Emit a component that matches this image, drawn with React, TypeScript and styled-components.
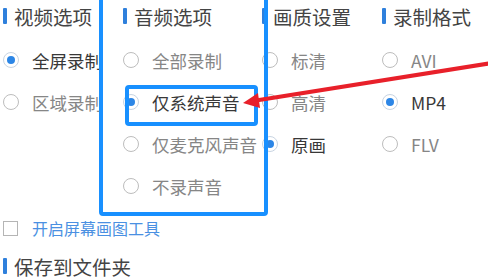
import React from "react";
import styled, { createGlobalStyle } from "styled-components";

const Global = createGlobalStyle`
  html, body { margin: 0; padding: 0; background: #fff; }
  body { font-family: "Noto Sans CJK SC", "Noto Sans", sans-serif; overflow: hidden; }
`;

const Page = styled.div`
  position: relative;
  width: 488px;
  height: 277px;
  overflow: hidden;
  padding-left: 3px;
  box-sizing: border-box;
`;

const Columns = styled.div`
  display: grid;
  grid-template-columns: 120px 139px 120px 1fr;
`;

const Column = styled.div`
  display: flex;
  flex-direction: column;
`;

const Title = styled.div`
  display: flex;
  align-items: center;
  gap: 7px;
  height: 32px;
  font-size: 19.5px;
  color: #444;
  white-space: nowrap;
  &::before {
    content: "";
    width: 4px;
    height: 16px;
    background: #2f80dc;
    border-radius: 1px;
  }
`;

const OptionList = styled.div`
  display: flex;
  flex-direction: column;
  margin-top: 7px;
`;

const Option = styled.div<{ $on?: boolean }>`
  display: flex;
  align-items: center;
  gap: 13px;
  height: 42px;
  font-size: 17.5px;
  color: ${(p) => (p.$on ? "#383838" : "#868686")};
  font-weight: 400;
  white-space: nowrap;
`;

const Radio = styled.span<{ $on?: boolean }>`
  flex: none;
  width: 16px;
  height: 16px;
  box-sizing: border-box;
  border-radius: 50%;
  border: 1.5px solid ${(p) => (p.$on ? "#c8d4e2" : "#bdbdbd")};
  display: flex;
  align-items: center;
  justify-content: center;
  background: #fff;
  &::after {
    content: "";
    width: 8px;
    height: 8px;
    border-radius: 50%;
    background: ${(p) => (p.$on ? "#2c86e6" : "transparent")};
  }
`;

const CheckRow = styled.div`
  display: flex;
  align-items: center;
  gap: 14px;
  height: 30px;
  margin-top: 6px;
  font-size: 16px;
  color: #4a90e2;
`;

const CheckBox = styled.span`
  width: 15px;
  height: 15px;
  box-sizing: border-box;
  border: 1.5px solid #b5b5b5;
  background: #fff;
`;

const SaveTitle = styled(Title)`
  margin-top: 7px;
`;

const Highlight = styled.div<{ $l: number; $t: number; $w: number; $h: number; $b: number }>`
  position: absolute;
  left: ${(p) => p.$l}px;
  top: ${(p) => p.$t}px;
  width: ${(p) => p.$w}px;
  height: ${(p) => p.$h}px;
  box-sizing: border-box;
  border: ${(p) => p.$b}px solid #1890ff;
  border-radius: 4px;
  pointer-events: none;
`;

const ArrowLayer = styled.svg`
  position: absolute;
  left: 0;
  top: 0;
  pointer-events: none;
`;

type Opt = { label: string; on?: boolean };
const groups: { title: string; options: Opt[] }[] = [
  { title: "视频选项", options: [{ label: "全屏录制", on: true }, { label: "区域录制" }] },
  {
    title: "音频选项",
    options: [
      { label: "全部录制" },
      { label: "仅系统声音", on: true },
      { label: "仅麦克风声音" },
      { label: "不录声音" },
    ],
  },
  { title: "画质设置", options: [{ label: "标清" }, { label: "高清" }, { label: "原画", on: true }] },
  { title: "录制格式", options: [{ label: "AVI" }, { label: "MP4", on: true }, { label: "FLV" }] },
];

export default function App() {
  return (
    <>
      <Global />
      <Page>
        <Columns>
          {groups.map((g) => (
            <Column key={g.title}>
              <Title>{g.title}</Title>
              <OptionList>
                {g.options.map((o) => (
                  <Option key={o.label} $on={o.on}>
                    <Radio $on={o.on} />
                    {o.label}
                  </Option>
                ))}
              </OptionList>
            </Column>
          ))}
        </Columns>
        <CheckRow>
          <CheckBox />
          开启屏幕画图工具
        </CheckRow>
        <SaveTitle>保存到文件夹</SaveTitle>

        <Highlight $l={99} $t={-10} $w={169} $h={226} $b={4.5} />
        <Highlight $l={125} $t={85} $w={133} $h={41} $b={4} />
        <ArrowLayer width="488" height="277" viewBox="0 0 488 277">
          <line x1="492" y1="63" x2="256" y2="100.5" stroke="#e8202a" strokeWidth="4" />
          <polygon points="243,103 258,93 260,108" fill="#e8202a" />
        </ArrowLayer>
      </Page>
    </>
  );
}
